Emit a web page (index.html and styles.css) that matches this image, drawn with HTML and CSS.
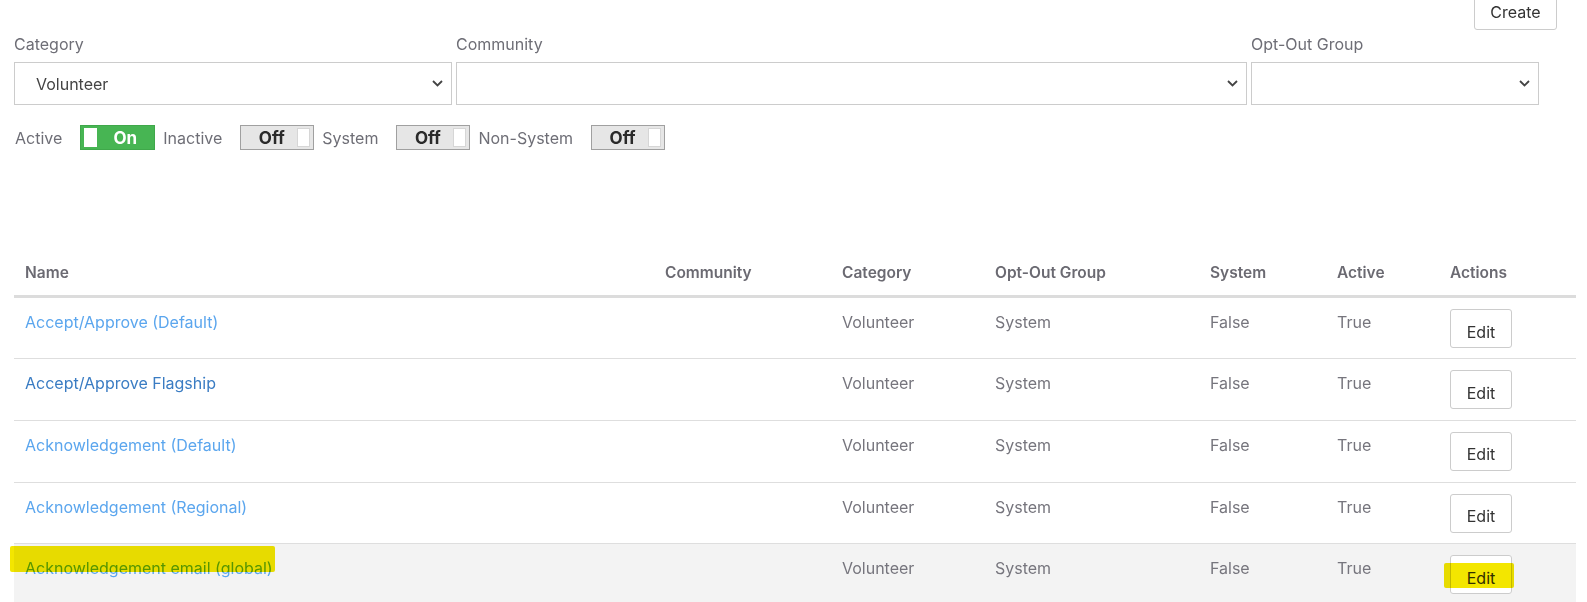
FILE: index.html
```html
<!DOCTYPE html>
<html lang="en">
<head>
<meta charset="utf-8">
<title>Templates</title>
<link rel="stylesheet" href="styles.css">
</head>
<body>
<div class="page">
  <div class="topbar">
    <button class="btn btn-create">Create</button>
  </div>

  <div class="filters">
    <div class="field">
      <div class="field-label">Category</div>
      <div class="select">
        <span class="select-value">Volunteer</span>
        <svg class="chev" width="11" height="7" viewBox="0 0 11 7"><path d="M1 1l4.5 4.5L10 1" fill="none" stroke="#444" stroke-width="1.8"/></svg>
      </div>
    </div>
    <div class="field">
      <div class="field-label">Community</div>
      <div class="select">
        <span class="select-value"></span>
        <svg class="chev" width="11" height="7" viewBox="0 0 11 7"><path d="M1 1l4.5 4.5L10 1" fill="none" stroke="#444" stroke-width="1.8"/></svg>
      </div>
    </div>
    <div class="field">
      <div class="field-label">Opt-Out Group</div>
      <div class="select">
        <span class="select-value"></span>
        <svg class="chev" width="11" height="7" viewBox="0 0 11 7"><path d="M1 1l4.5 4.5L10 1" fill="none" stroke="#444" stroke-width="1.8"/></svg>
      </div>
    </div>
  </div>

  <div class="toggles">
    <span class="toggle-label">Active</span>
    <span class="toggle on"><span class="knob"></span><span class="toggle-text">On</span></span>
    <span class="toggle-label">Inactive</span>
    <span class="toggle off"><span class="toggle-text">Off</span><span class="knob"></span></span>
    <span class="toggle-label">System</span>
    <span class="toggle off"><span class="toggle-text">Off</span><span class="knob"></span></span>
    <span class="toggle-label">Non-System</span>
    <span class="toggle off"><span class="toggle-text">Off</span><span class="knob"></span></span>
  </div>

  <table class="grid">
    <colgroup>
      <col class="c-name"><col class="c-comm"><col class="c-cat"><col class="c-opt"><col class="c-sys"><col class="c-act"><col class="c-actions">
    </colgroup>
    <thead>
      <tr>
        <th>Name</th><th>Community</th><th>Category</th><th>Opt-Out Group</th><th>System</th><th>Active</th><th>Actions</th>
      </tr>
    </thead>
    <tbody>
      <tr>
        <td><a class="link" href="#">Accept/Approve (Default)</a></td><td></td><td>Volunteer</td><td>System</td><td>False</td><td>True</td>
        <td class="actions"><button class="btn btn-edit">Edit</button></td>
      </tr>
      <tr>
        <td><a class="link visited" href="#">Accept/Approve Flagship</a></td><td></td><td>Volunteer</td><td>System</td><td>False</td><td>True</td>
        <td class="actions"><button class="btn btn-edit">Edit</button></td>
      </tr>
      <tr>
        <td><a class="link" href="#">Acknowledgement (Default)</a></td><td></td><td>Volunteer</td><td>System</td><td>False</td><td>True</td>
        <td class="actions"><button class="btn btn-edit">Edit</button></td>
      </tr>
      <tr>
        <td><a class="link" href="#">Acknowledgement (Regional)</a></td><td></td><td>Volunteer</td><td>System</td><td>False</td><td>True</td>
        <td class="actions"><button class="btn btn-edit">Edit</button></td>
      </tr>
      <tr class="hover">
        <td class="hl-cell"><a class="link" href="#">Acknowledgement email (global)</a><span class="marker marker-name"></span></td><td></td><td>Volunteer</td><td>System</td><td>False</td><td>True</td>
        <td class="actions"><span class="edit-wrap"><button class="btn btn-edit">Edit</button><span class="marker marker-edit"></span></span></td>
      </tr>
    </tbody>
  </table>
</div>
</body>
</html>
```

FILE: styles.css
```css
* { box-sizing: border-box; }

body {
  margin: 0;
  font-family: Inter, "Noto Sans", Arial, sans-serif;
  color: #444;
  background: #fff;
  overflow: hidden;
}

.page {
  padding: 0 11px 0 14px;
}

.topbar {
  display: flex;
  justify-content: flex-end;
  height: 30px;
  padding-right: 19px;
}

.btn {
  font-family: Inter, "Noto Sans", Arial, sans-serif;
  font-size: 16px;
  color: #333;
  background: #fff;
  border: 1px solid #ccc;
  border-radius: 3px;
  cursor: pointer;
  padding: 0;
}

.btn-create {
  width: 83px;
  height: 36px;
  margin-top: -6px;
  padding-top: 0;
}

.filters {
  display: grid;
  grid-template-columns: 438px 791px 288px;
  column-gap: 4px;
  margin-top: 4px;
}

.field-label {
  font-size: 16px;
  line-height: 20px;
  color: #6e6e76;
  margin-bottom: 8px;
}

.select {
  height: 43px;
  border: 1px solid #ccc;
  display: flex;
  align-items: center;
  justify-content: space-between;
  padding: 0 8px 0 21px;
}

.select-value {
  font-size: 16px;
  color: #444;
}

.chev { display: block; }

.toggles {
  display: flex;
  align-items: center;
  margin-top: 20px;
  height: 25px;
}

.toggle-label {
  font-size: 16px;
  color: #6e6e76;
  margin-right: 18px;
  margin-left: 1px;
}

.toggle {
  display: flex;
  align-items: center;
  width: 74px;
  height: 25px;
  padding: 0 3px;
  margin-right: 7px;
  font-size: 17px;
  font-weight: 700;
}

.toggle.on {
  width: 75px;
  background: #47b553;
  border: 1px solid #3fa84a;
  color: #fff;
}

.toggle.off {
  background: #e6e6e6;
  border: 1px solid #a0a0a0;
  color: #2a2a2a;
}

.knob {
  width: 13px;
  height: 19px;
  background: #fff;
  border: 1px solid #d6d6d6;
}

.toggle.on .knob { border-color: #fff; }

.toggle-text {
  flex: 1;
  text-align: center;
  padding-left: 2px;
}

.grid {
  margin-top: 101px;
  width: 1562px;
  border-collapse: collapse;
  table-layout: fixed;
}

.c-name { width: 640px; }
.c-comm { width: 177px; }
.c-cat { width: 153px; }
.c-opt { width: 215px; }
.c-sys { width: 127px; }
.c-act { width: 113px; }
.c-actions { width: 137px; }

.grid th {
  text-align: left;
  font-size: 15.5px;
  font-weight: 600;
  line-height: 20px;
  color: #6b6a72;
  padding: 12px 11px 12px;
  border-bottom: 3px solid #dcdcdc;
}

.grid td {
  font-size: 16px;
  line-height: 20px;
  color: #76757d;
  padding: 14px 11px 10px;
  vertical-align: top;
  border-bottom: 1px solid #dedede;
  height: 61.8px;
}

.grid td.actions {
  padding-top: 11px;
}

.grid tr.hover td {
  background: #f3f3f3;
  border-bottom: none;
}

.link {
  color: #5ba6ee;
  text-decoration: none;
}

.link.visited { color: #3a7cc3; }

.btn-edit {
  display: block;
  width: 62px;
  height: 39px;
  padding-top: 6px;
  font-size: 16px;
}

.hl-cell { position: relative; }

.edit-wrap {
  position: relative;
  display: block;
  width: 62px;
}

.marker {
  position: absolute;
  background: #f3e600;
  mix-blend-mode: multiply;
  border-radius: 2px;
}

.marker-name {
  left: -4px;
  top: 2px;
  width: 265px;
  height: 26px;
}

.marker-edit {
  left: -6px;
  top: 8px;
  width: 70px;
  height: 25px;
}
```
